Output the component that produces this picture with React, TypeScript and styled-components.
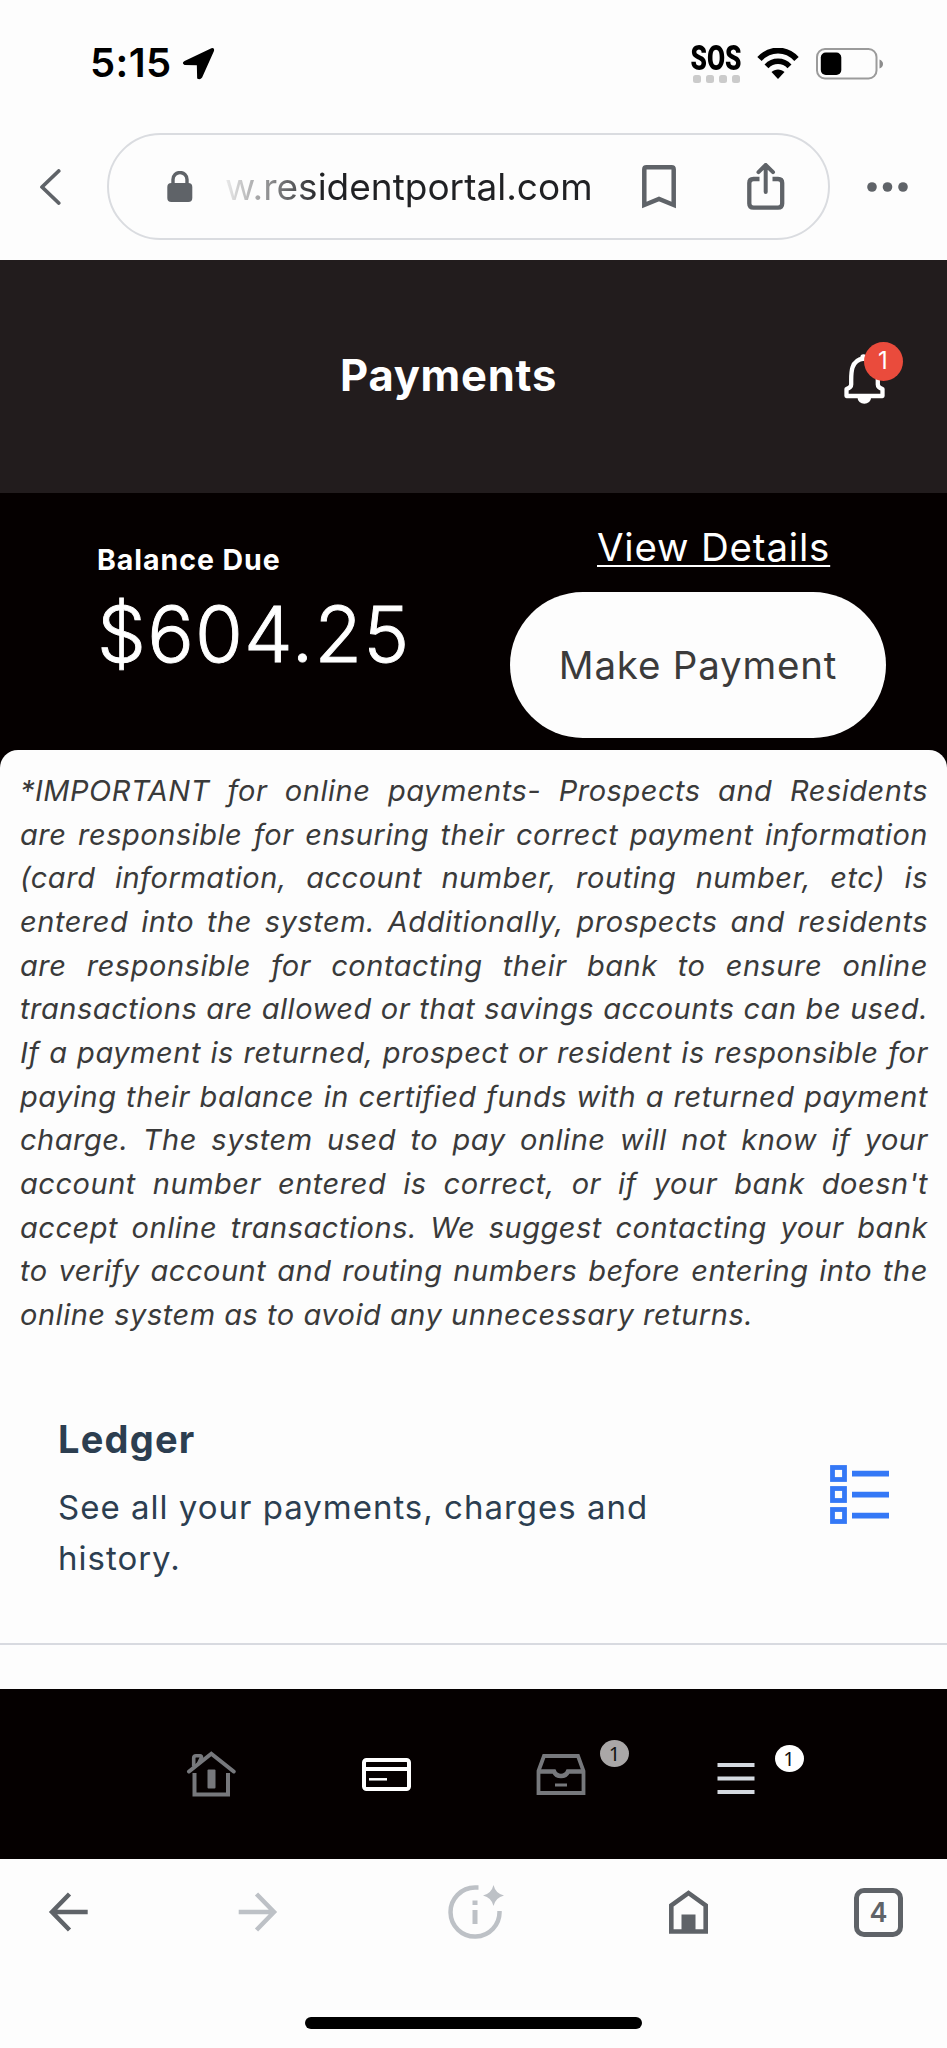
import React from "react";
import styled, { createGlobalStyle, css } from "styled-components";

const Global = createGlobalStyle`
  *, *::before, *::after { box-sizing: border-box; }
  body { margin: 0; background: #fdfdfd; }
  svg { display: block; flex: none; }
`;

const Screen = styled.div`
  width: 947px;
  height: 2048px;
  overflow: hidden;
  display: flex;
  flex-direction: column;
  background: #fdfdfd;
  font-family: "Inter", sans-serif;
`;

const StatusBar = styled.div`
  height: 127px;
  padding: 0 64px 0 90px;
  display: flex;
  align-items: center;
  color: #000;
`;
const Clock = styled.span`
  font-size: 40px;
  line-height: 48px;
  font-weight: 600;
  letter-spacing: 0.4px;
  margin-right: 10px;
  padding-bottom: 1px;
`;
const StatusRight = styled.div`
  margin-left: auto;
  display: flex;
  align-items: center;
`;
const Sos = styled.div`
  width: 50px;
  height: 38px;
  margin-right: 16px;
  display: flex;
  flex-direction: column;
  justify-content: space-between;
  align-items: center;
`;
const SosText = styled.span`
  font-family: "Roboto", sans-serif;
  font-weight: 900;
  font-size: 35px;
  line-height: 28px;
  transform: scaleX(0.75);
`;
const Dots = styled.div`
  display: flex;
  gap: 5px;
`;
const Dot = styled.i`
  width: 8px;
  height: 8px;
  border-radius: 2.5px;
  background: #cbcbcb;
`;

const AddressRow = styled.div`
  height: 133px;
  padding: 6px 0 20px 39px;
  display: flex;
  align-items: center;
`;
const Omnibox = styled.div`
  width: 723px;
  height: 107px;
  margin-left: 46px;
  margin-right: 37px;
  padding-left: 58px;
  border: 2px solid #dadce0;
  border-radius: 54px;
  display: flex;
  align-items: center;
`;
const Url = styled.span`
  width: 372px;
  margin-left: 32px;
  margin-right: 45px;
  font-size: 37px;
  line-height: 50px;
  white-space: nowrap;
  color: transparent;
  background: linear-gradient(90deg, rgba(32, 33, 36, 0.08) 0, #202124 96px);
  background-clip: text;
  -webkit-background-clip: text;
`;
const Gap = styled.div<{ $w: number }>`
  flex: none;
  width: ${(p) => p.$w}px;
`;

const Header = styled.header`
  height: 233px;
  padding: 2px 0 0 340px;
  display: flex;
  align-items: center;
  background: #221c1d;
  color: #fff;
`;
const Title = styled.h1`
  margin: 0 0 5px;
  width: 503px;
  font-size: 43.5px;
  line-height: 52px;
  font-weight: 700;
  letter-spacing: 0.75px;
`;
const Bell = styled.div`
  position: relative;
  width: 43px;
  height: 50px;
`;
const badgeText = css`
  display: flex;
  align-items: center;
  justify-content: center;
  position: absolute;
`;
const Alert = styled.span`
  ${badgeText}
  left: 21px;
  top: -10.5px;
  width: 39px;
  height: 39px;
  border-radius: 50%;
  background: #ea4b3c;
  color: #fff;
  font-size: 24px;
  line-height: 30px;
  padding: 0 1px 2px 0;
`;

const Summary = styled.section`
  height: 257px;
  padding: 0 61px 0 97px;
  display: flex;
  justify-content: space-between;
  background: #050000;
  color: #fff;
`;
const Balance = styled.div`
  padding-top: 49px;
`;
const BalanceLabel = styled.div`
  font-size: 28.5px;
  line-height: 36px;
  font-weight: 700;
  letter-spacing: 0.95px;
`;
const Amount = styled.div`
  margin-top: 8px;
  font-size: 77.5px;
  line-height: 96px;
  font-weight: 300;
  -webkit-text-stroke: 0.9px #fff;
  letter-spacing: 1.2px;
`;
const Actions = styled.div`
  width: 376px;
  padding-top: 30px;
`;
const Details = styled.a`
  display: block;
  margin: 0 0 21px 87px;
  font-size: 38.5px;
  line-height: 48px;
  font-weight: 400;
  letter-spacing: 0.8px;
  text-decoration: underline;
  text-decoration-thickness: 2px;
  text-underline-offset: 4px;
  text-decoration-skip-ink: none;
  white-space: nowrap;
`;
const Pay = styled.button`
  width: 376px;
  height: 146px;
  padding: 0;
  border: 0;
  border-radius: 73px;
  background: #fdfdfd;
  color: #3b3b3b;
  font-family: inherit;
  font-size: 38.5px;
  letter-spacing: 0.8px;
  white-space: nowrap;
`;

const Corners = styled.div`
  background: #050000;
`;
const Sheet = styled.main`
  height: 939px;
  padding-top: 19px;
  border-radius: 18px 18px 0 0;
  background: #fdfdfd;
`;
const Notice = styled.p`
  margin: 0 19px 0 20px;
  height: 567px;
  font-size: 29px;
  line-height: 43.67px;
  font-style: italic;
  letter-spacing: 0.52px;
  color: #3a3a3a;
`;
const Line = styled.span<{ $last?: boolean }>`
  display: block;
  white-space: nowrap;
  text-align-last: ${(p) => (p.$last ? "left" : "justify")};
`;
const Ledger = styled.section`
  height: 309px;
  padding: 80px 56px 0 58px;
  display: flex;
  justify-content: space-between;
  border-bottom: 2px solid #d8dae0;
  color: #2c3e50;
`;
const LedgerTitle = styled.h2`
  margin: 0 0 19px;
  font-size: 38px;
  line-height: 47px;
  font-weight: 700;
  letter-spacing: 1.2px;
`;
const LedgerText = styled.p`
  margin: 0;
  width: 640px;
  font-size: 33px;
  line-height: 51px;
  letter-spacing: 1px;
`;
const ListSlot = styled.div`
  padding-top: 49px;
`;

const Tabs = styled.nav`
  height: 170px;
  padding-left: 186px;
  display: flex;
  align-items: center;
  background: #050000;
`;
const Tab = styled.div<{ $w: number; $drop?: number }>`
  position: relative;
  width: ${(p) => p.$w}px;
  padding-top: ${(p) => p.$drop ?? 0}px;
`;
const Count = styled.span<{ $x: number; $y: number; $bg: string }>`
  ${badgeText}
  left: ${(p) => p.$x}px;
  top: ${(p) => p.$y}px;
  width: 29px;
  height: 27px;
  border-radius: 50%;
  background: ${(p) => p.$bg};
  color: #111;
  font-family: "Noto Sans", sans-serif;
  font-size: 20px;
  line-height: 27px;
`;

const Toolbar = styled.div`
  height: 106px;
  padding-left: 48px;
  display: flex;
  align-items: center;
`;
const TabCount = styled.div`
  width: 49px;
  height: 49px;
  border: 5px solid #5f6368;
  border-radius: 10px;
  display: flex;
  align-items: center;
  justify-content: center;
  color: #5f6368;
  font-size: 27px;
  font-weight: 600;
`;
const HomeBar = styled.div`
  width: 337px;
  height: 12px;
  margin: 52px 0 0 305px;
  border-radius: 6px;
  background: #000;
`;

const LINES = [
  "*IMPORTANT for online payments- Prospects and Residents",
  "are responsible for ensuring their correct payment information",
  "(card information, account number, routing number, etc) is",
  "entered into the system. Additionally, prospects and residents",
  "are responsible for contacting their bank to ensure online",
  "transactions are allowed or that savings accounts can be used.",
  "If a payment is returned, prospect or resident is responsible for",
  "paying their balance in certified funds with a returned payment",
  "charge. The system used to pay online will not know if your",
  "account number entered is correct, or if your bank doesn't",
  "accept online transactions. We suggest contacting your bank",
  "to verify account and routing numbers before entering into the",
  "online system as to avoid any unnecessary returns.",
];

const G = "#5f6368";

export default function App() {
  return (
    <>
      <Global />
      <Screen>
        <StatusBar>
          <Clock>5:15</Clock>
          <svg width="33" height="33" viewBox="0 0 32 32">
            <path d="M2.500 13.500 28.500 1.200Q31.800 .4 31 3.800L19.500 29.500Q17.500 32.400 14.700 30.500L14.400 17.800 2.500 17.500Q-.8 15.600 2.500 13.500Z" fill="#000" />
          </svg>
          <StatusRight>
            <Sos>
              <SosText>SOS</SosText>
              <Dots><Dot /><Dot /><Dot /><Dot /></Dots>
            </Sos>
            <svg width="42" height="32" viewBox="0 0 42 32">
              <path d="M2.500 11C13-.2 29-.2 39.500 11" fill="none" stroke="#000" strokeWidth="6" />
              <path d="M9.500 18.300C16 11.600 26 11.600 32.500 18.300" fill="none" stroke="#000" strokeWidth="5.500" />
              <path d="M14.500 24C18 20.600 24 20.600 27.500 24L21 31Z" fill="#000" />
            </svg>
            <Gap $w={17} />
            <svg width="67" height="32" viewBox="0 0 67 32">
              <rect x="1" y="1" width="59.500" height="29.500" rx="8" fill="none" stroke="#9b9b9b" strokeWidth="2" />
              <rect x="4.800" y="4.500" width="20.500" height="22.500" rx="5" fill="#000" />
              <path d="M63.500 11.500q3.500 1.500 3.500 4.500t-3.500 4.500z" fill="#8d8d8d" />
            </svg>
          </StatusRight>
        </StatusBar>

        <AddressRow>
          <svg width="22" height="36" viewBox="0 0 22 36">
            <path d="M19.700 2 3 18 19.700 34" fill="none" stroke={G} strokeWidth="3.800" strokeLinecap="round" strokeLinejoin="round" />
          </svg>
          <Omnibox>
            <svg width="26" height="31" viewBox="0 0 26 31">
              <rect x="0.300" y="12" width="25" height="19" rx="4" fill={G} />
              <path d="M6 14V8.500a7 7 0 0 1 14 0V14" fill="none" stroke={G} strokeWidth="3.400" />
            </svg>
            <Url>w.residentportal.com</Url>
            <svg width="34" height="44" viewBox="0 0 34 44">
              <path d="M2.300 40V4.500Q2.300 2.300 4.500 2.300H29.500Q31.700 2.300 31.700 4.500V40L17 34Z" fill="none" stroke={G} strokeWidth="4.500" />
            </svg>
            <Gap $w={71} />
            <svg width="38" height="47" viewBox="0 0 38 47">
              <path d="M12.500 16H6.500Q2.300 16 2.300 20V40.500Q2.300 44.700 6.500 44.700H31Q35.200 44.700 35.200 40.500V20Q35.200 16 31 16H25.500" fill="none" stroke={G} strokeWidth="4.300" />
              <path d="M18.700 29V3M11.500 9.200 18.700 2 26 9.200" fill="none" stroke={G} strokeWidth="4" strokeLinecap="round" />
            </svg>
          </Omnibox>
          <svg width="42" height="10" viewBox="0 0 42 10" fill={G}>
            <circle cx="5" cy="5" r="4.800" /><circle cx="20.500" cy="5" r="4.800" /><circle cx="36" cy="5" r="4.800" />
          </svg>
        </AddressRow>

        <Header>
          <Title>Payments</Title>
          <Bell>
            <svg width="43" height="51" viewBox="0 0 43 51">
              <path d="M21 5.500Q12 6.500 9.500 14.500 8.200 18.500 8.200 27V31.500Q8.200 34.500 3.500 36V43H39.500V36Q34.800 34.500 34.800 31.500V27Q34.800 18.500 33.500 14.500 30 6.500 21 5.500Z" fill="none" stroke="#fff" strokeWidth="4.300" strokeLinejoin="round" />
              <circle cx="20.500" cy="4.500" r="3.200" fill="#fff" />
              <path d="M14.500 44.500a6.800 6.200 0 0 0 13.600 0z" fill="#fff" />
            </svg>
            <Alert>1</Alert>
          </Bell>
        </Header>

        <Summary>
          <Balance>
            <BalanceLabel>Balance Due</BalanceLabel>
            <Amount>$604.25</Amount>
          </Balance>
          <Actions>
            <Details>View Details</Details>
            <Pay>Make Payment</Pay>
          </Actions>
        </Summary>

        <Corners>
          <Sheet>
            <Notice>
              {LINES.map((l, i) => (
                <Line key={i} $last={i === LINES.length - 1}>{l}</Line>
              ))}
            </Notice>
            <Ledger>
              <div>
                <LedgerTitle>Ledger</LedgerTitle>
                <LedgerText>See all your payments, charges and history.</LedgerText>
              </div>
              <ListSlot>
                <svg width="61" height="60" viewBox="0 0 61 60" fill="none" stroke="#3478f6">
                  {[0, 21, 42].map((y) => (
                    <g key={y}>
                      <rect x="2.500" y={y + 2.500} width="12" height="12" strokeWidth="4.800" />
                      <path d={`M22 ${y + 8.700}H59`} strokeWidth="5.800" />
                    </g>
                  ))}
                </svg>
              </ListSlot>
            </Ledger>
          </Sheet>
        </Corners>

        <Tabs>
          <Tab $w={176}>
            <svg width="50" height="46" viewBox="0 0 50 46" fill="none" stroke="#77787c" strokeWidth="4">
              <path d="M3 20.500 25.300 2.800 47.700 20.500" strokeLinecap="round" />
              <path d="M8.500 22V43.500H42V22" />
              <path d="M7.700 15.500V7Q7.700 4.700 10 4.700H14Q15.500 4.700 15.500 6.500L12 13.500" strokeWidth="3.600" />
              <rect x="21.500" y="18.500" width="8" height="19" rx="1" fill="#77787c" stroke="none" />
            </svg>
          </Tab>
          <Tab $w={174}>
            <svg width="49" height="33" viewBox="0 0 49 33" fill="none" stroke="#fff">
              <rect x="2" y="2" width="45" height="29" rx="2.500" strokeWidth="4" />
              <path d="M3 11H46" strokeWidth="4" /><path d="M7 21.300H25" strokeWidth="2.500" />
            </svg>
          </Tab>
          <Tab $w={181}>
            <svg width="50" height="41" viewBox="0 0 50 41" fill="none" stroke="#77787c" strokeWidth="3.800">
              <path d="M2.500 17 8 2H42L47.500 17V39H2.500Z" />
              <path d="M2.500 17.500H18Q20 22 25 22T32 17.500H47.500" strokeWidth="4.500" />
              <path d="M19 31H31" strokeWidth="3" />
            </svg>
            <Count $x={64} $y={-14} $bg="#aaa7a7">1</Count>
          </Tab>
          <Tab $w={60} $drop={9}>
            <svg width="38" height="31" viewBox="0 0 38 31" stroke="#d5d9e0" strokeWidth="4">
              <path d="M.5 2H37.500M.5 15.500H37.500M.5 29H37.500" />
            </svg>
            <Count $x={57.500} $y={-9.500} $bg="#fff">1</Count>
          </Tab>
        </Tabs>

        <Toolbar>
          <svg width="40" height="40" viewBox="0 0 40 40" fill="none" stroke={G} strokeWidth="4.500">
            <path d="M21.500 2 4 20 21.500 38M4 20H39.700" />
          </svg>
          <Gap $w={150} />
          <svg width="40" height="40" viewBox="0 0 40 40" fill="none" stroke="#bdc1c6" strokeWidth="4.500">
            <path d="M18.500 2 36 20 18.500 38M36 20H.7" />
          </svg>
          <Gap $w={170} />
          <svg width="56" height="54" viewBox="0 0 56 54" fill="none" stroke="#bdc1c6" strokeWidth="4.500">
            <path d="M30.500 2.600H27A24.500 24.500 0 1 0 51.500 26" />
            <path d="M27 15.500V20M27 25V39" strokeWidth="5" />
            <path d="M45.500 0Q47.500 8.500 56 10.500 47.500 12.500 45.500 21 43.500 12.500 35 10.500 43.500 8.500 45.500 0Z" fill="#bdc1c6" stroke="none" />
          </svg>
          <Gap $w={165} />
          <svg width="39" height="44" viewBox="0 0 39 44">
            <path d="M2.300 41.500V15.500L19.500 3 36.700 15.500V41.500Z" fill="none" stroke={G} strokeWidth="4.600" />
            <rect x="12.500" y="24.500" width="14" height="16" fill={G} />
          </svg>
          <Gap $w={146} />
          <TabCount>4</TabCount>
        </Toolbar>
        <HomeBar />
      </Screen>
    </>
  );
}
